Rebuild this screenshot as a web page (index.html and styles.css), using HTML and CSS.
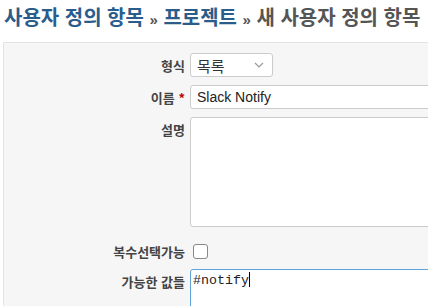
FILE: index.html
```html
<!DOCTYPE html>
<html lang="ko">
<head>
    <meta charset="UTF-8">
    <title>새 사용자 정의 항목</title>
    <link rel="stylesheet" href="styles.css">
</head>
<body>
    <h2 class="title">
        <a href="#">사용자 정의 항목</a> <span class="sep">»</span> <a href="#">프로젝트</a> <span class="sep">»</span> 새 사용자 정의 항목
    </h2>

    <div class="box">
        <div class="row">
            <label class="lbl">형식</label>
            <div class="select">
                <span>목록</span>
                <svg width="10" height="6" viewBox="0 0 10 6"><path d="M1 1l4 4 4-4" fill="none" stroke="#999" stroke-width="1.2"/></svg>
            </div>
        </div>
        <div class="row">
            <label class="lbl">이름 <span class="req">*</span></label>
            <div class="input">Slack Notify</div>
        </div>
        <div class="row">
            <label class="lbl">설명</label>
            <div class="textarea"></div>
        </div>
        <div class="row row-check">
            <label class="lbl">복수선택가능</label>
            <span class="checkbox"></span>
        </div>
        <div class="row">
            <label class="lbl">가능한 값들</label>
            <div class="textarea values">#notify<span class="caret"></span></div>
        </div>
    </div>
</body>
</html>
```

FILE: styles.css
```css
body {
    margin: 0;
    padding: 0 0 0 3px;
    background: #fff;
    overflow: hidden;
    font-family: "Liberation Sans", "Noto Sans CJK KR", sans-serif;
    color: #333;
}
.title {
    margin: 0;
    padding: 5px 0 0 1px;
    height: 42px;
    box-sizing: border-box;
    font-size: 20px;
    font-weight: bold;
    line-height: 26px;
    color: #555;
    white-space: nowrap;
}
.title a {
    color: #2a5d8c;
    text-decoration: none;
}
.title .sep {
    font-size: 15px;
}
.box {
    width: 600px;
    height: 300px;
    background-color: #f6f6f6;
    border: 1px solid #e4e4e4;
    padding-top: 10px;
}
.row {
    display: flex;
    align-items: flex-start;
    margin-bottom: 8px;
}
.lbl {
    width: 186px;
    flex-shrink: 0;
    box-sizing: border-box;
    padding: 4px 5px 0 0;
    text-align: right;
    font-family: "Noto Sans CJK KR", sans-serif;
    font-size: 13px;
    font-weight: bold;
    line-height: 17px;
    color: #444;
}
.req {
    color: #bb0000;
}
.select {
    width: 83px;
    height: 24px;
    box-sizing: border-box;
    display: flex;
    align-items: center;
    justify-content: space-between;
    padding: 0 8px 0 6px;
    border: 1px solid #ccc;
    border-radius: 3px;
    background: #fff;
    font-family: "Noto Sans CJK KR", sans-serif;
    font-size: 15px;
    color: #333;
}
.input {
    width: 300px;
    height: 24px;
    box-sizing: border-box;
    padding: 0 6px;
    border: 1px solid #ccc;
    border-radius: 3px;
    background: #fff;
    font-size: 14px;
    line-height: 22px;
    color: #222;
}
.textarea {
    width: 300px;
    height: 110px;
    box-sizing: border-box;
    border: 1px solid #ccc;
    border-radius: 3px;
    background: #fff;
}
.row-check {
    align-items: center;
    margin: 16px 0 9px 0;
}
.row-check .lbl {
    padding-top: 0;
}
.checkbox {
    display: block;
    width: 13px;
    height: 13px;
    margin-left: 3px;
    border: 1px solid #888;
    border-radius: 3px;
    background: #fff;
}
.values {
    padding: 2px;
    border-color: #5fa3de;
    font-family: "Liberation Mono", monospace;
    font-size: 13.3px;
    line-height: 16px;
    color: #222;
}
.caret {
    display: inline-block;
    width: 1px;
    height: 15px;
    background: #000;
    vertical-align: -3px;
}
```
